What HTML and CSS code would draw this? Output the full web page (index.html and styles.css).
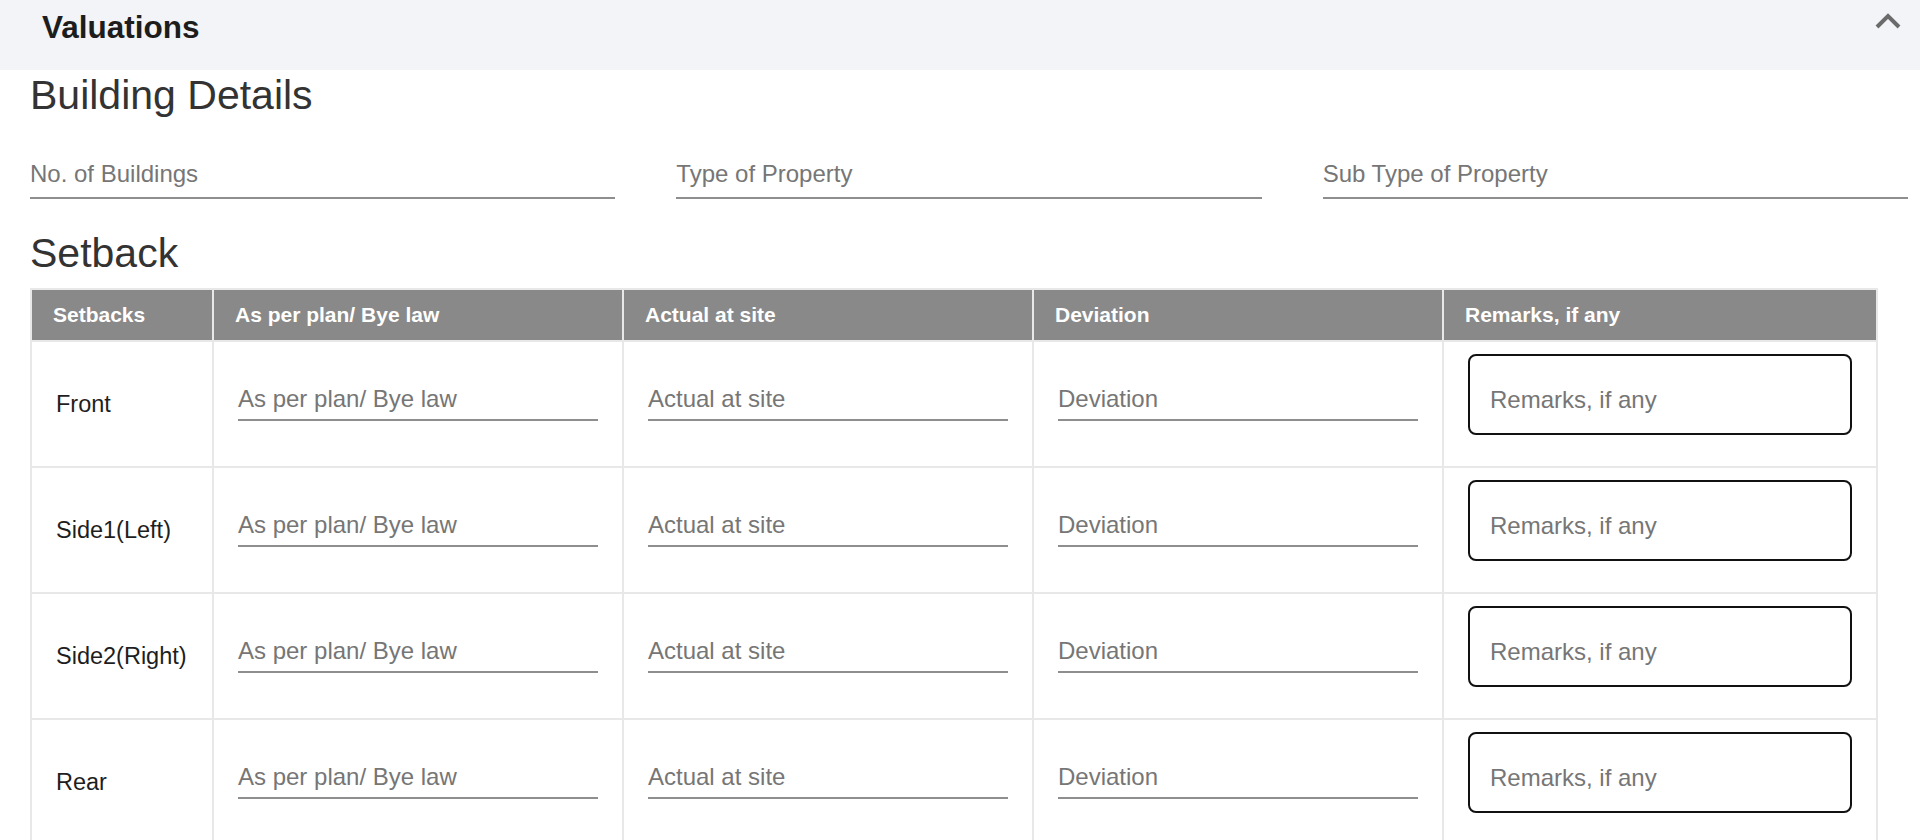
FILE: index.html
```html
<!DOCTYPE html>
<html lang="en">
<head>
<meta charset="utf-8">
<title>Valuations</title>
<link rel="stylesheet" href="styles.css">
</head>
<body>
<header class="panel-head">
  <h1 class="panel-title">Valuations</h1>
  <button class="collapse-btn" type="button" aria-label="Collapse">
    <svg width="26" height="17" viewBox="0 0 26 17" aria-hidden="true">
      <path d="M2 14 L13 3 L24 14" fill="none" stroke="#6b6b6b" stroke-width="4"/>
    </svg>
  </button>
</header>
<main class="content">
  <h2 class="section-title">Building Details</h2>
  <div class="field-grid">
    <label class="field"><span class="field-text">No. of Buildings</span></label>
    <label class="field"><span class="field-text">Type of Property</span></label>
    <label class="field"><span class="field-text">Sub Type of Property</span></label>
  </div>

  <h2 class="section-title setback-title">Setback</h2>
  <table class="setback-table">
    <colgroup>
      <col class="col-name">
      <col class="col-mid">
      <col class="col-mid">
      <col class="col-mid">
      <col class="col-rem">
    </colgroup>
    <thead>
      <tr>
        <th>Setbacks</th>
        <th>As per plan/ Bye law</th>
        <th>Actual at site</th>
        <th>Deviation</th>
        <th>Remarks, if any</th>
      </tr>
    </thead>
    <tbody>
      <tr>
        <td class="name-cell">Front</td>
        <td class="input-cell"><label class="field"><span class="field-text">As per plan/ Bye law</span></label></td>
        <td class="input-cell"><label class="field"><span class="field-text">Actual at site</span></label></td>
        <td class="input-cell"><label class="field"><span class="field-text">Deviation</span></label></td>
        <td class="remark-cell"><label class="remark-box"><span class="field-text">Remarks, if any</span></label></td>
      </tr>
      <tr>
        <td class="name-cell">Side1(Left)</td>
        <td class="input-cell"><label class="field"><span class="field-text">As per plan/ Bye law</span></label></td>
        <td class="input-cell"><label class="field"><span class="field-text">Actual at site</span></label></td>
        <td class="input-cell"><label class="field"><span class="field-text">Deviation</span></label></td>
        <td class="remark-cell"><label class="remark-box"><span class="field-text">Remarks, if any</span></label></td>
      </tr>
      <tr>
        <td class="name-cell">Side2(Right)</td>
        <td class="input-cell"><label class="field"><span class="field-text">As per plan/ Bye law</span></label></td>
        <td class="input-cell"><label class="field"><span class="field-text">Actual at site</span></label></td>
        <td class="input-cell"><label class="field"><span class="field-text">Deviation</span></label></td>
        <td class="remark-cell"><label class="remark-box"><span class="field-text">Remarks, if any</span></label></td>
      </tr>
      <tr>
        <td class="name-cell">Rear</td>
        <td class="input-cell"><label class="field"><span class="field-text">As per plan/ Bye law</span></label></td>
        <td class="input-cell"><label class="field"><span class="field-text">Actual at site</span></label></td>
        <td class="input-cell"><label class="field"><span class="field-text">Deviation</span></label></td>
        <td class="remark-cell"><label class="remark-box"><span class="field-text">Remarks, if any</span></label></td>
      </tr>
    </tbody>
  </table>
</main>
</body>
</html>
```

FILE: styles.css
```css
html, body {
  margin: 0;
  padding: 0;
  overflow: hidden;
  background: #ffffff;
}

body {
  font-family: "Liberation Sans", Arial, Helvetica, sans-serif;
  color: #222222;
}

.panel-head {
  box-sizing: border-box;
  height: 70px;
  background: #f2f4f8;
  display: flex;
  justify-content: space-between;
  align-items: flex-start;
  padding: 10px 19px 0 42px;
}

.panel-title {
  margin: 0;
  font-size: 31.5px;
  line-height: 34px;
  font-weight: 700;
  color: #1d1d1d;
}

.collapse-btn {
  display: block;
  margin: 3px 0 0 0;
  padding: 0;
  border: 0;
  background: none;
  cursor: pointer;
}

.collapse-btn svg {
  display: block;
}

.content {
  padding: 2px 12px 0 30px;
}

.section-title {
  margin: 0;
  font-size: 41px;
  line-height: 46px;
  font-weight: 400;
  color: #333333;
}

.setback-title {
  margin-top: 31px;
}

.field-grid {
  margin-top: 33px;
  display: grid;
  grid-template-columns: repeat(3, 1fr);
  column-gap: 61px;
}

.field {
  box-sizing: border-box;
  height: 48px;
  display: flex;
  align-items: center;
  border-bottom: 2px solid #8e8e8e;
  cursor: text;
}

.field-text {
  font-size: 24px;
  color: #767676;
  white-space: nowrap;
}

.setback-table {
  margin-top: 12px;
  width: calc(100% - 30px);
  border-collapse: collapse;
  table-layout: fixed;
}

.col-name { width: 182px; }
.col-mid { width: 410px; }

.setback-table th,
.setback-table td {
  border: 2px solid #e8e8e8;
}

.setback-table th {
  box-sizing: border-box;
  height: 52px;
  padding: 0 21px;
  background: #898989;
  color: #ffffff;
  font-size: 21px;
  font-weight: 700;
  text-align: left;
  vertical-align: middle;
}

.name-cell {
  padding: 0 24px;
  font-size: 23.5px;
  color: #1e1e1e;
  vertical-align: middle;
  white-space: nowrap;
}

.input-cell {
  padding: 31px 24px 45px 24px;
  vertical-align: top;
}

.input-cell .field {
  padding-top: 5px;
}

.remark-cell {
  padding: 12px 24px 31px 24px;
  vertical-align: top;
}

.remark-box {
  box-sizing: border-box;
  height: 81px;
  display: flex;
  align-items: center;
  padding: 10px 20px 0 20px;
  border: 2px solid #111111;
  border-radius: 8px;
  cursor: text;
}
```
